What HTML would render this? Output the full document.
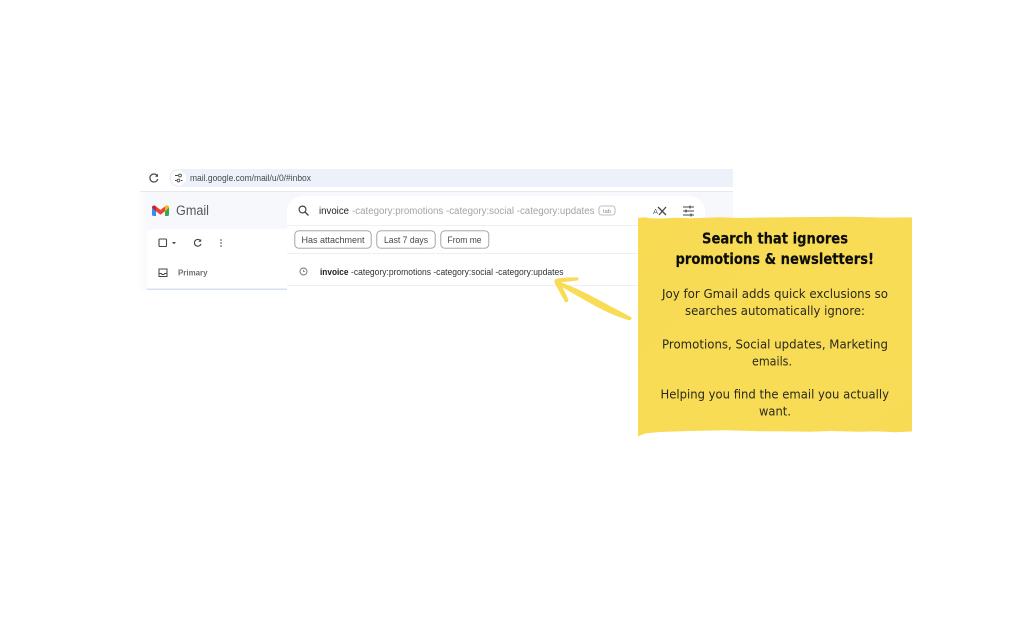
<!DOCTYPE html>
<html lang="en">
<head>
<meta charset="utf-8">
<title>Joy for Gmail</title>
<style>
html,body{margin:0;padding:0;background:#fff;width:1024px;height:640px;overflow:hidden}
svg{display:block;position:absolute;left:0;top:0}
text{font-family:"Liberation Sans",sans-serif}
.t{font-family:"DejaVu Sans","Liberation Sans",sans-serif;fill:#2b2a1c;text-anchor:start}
.h{font-weight:bold;fill:#0d0d08;stroke:#0d0d08;stroke-width:.2}
</style>
</head>
<body>
<svg width="1024" height="640" viewBox="0 0 1024 640" xmlns="http://www.w3.org/2000/svg">
<defs>
<filter id="b" x="-5%" y="-5%" width="110%" height="110%"><feGaussianBlur stdDeviation="0.35"/></filter>
<filter id="c" x="-5%" y="-5%" width="110%" height="110%"><feGaussianBlur stdDeviation="0.25"/></filter>
<linearGradient id="fade" x1="0" x2="1" y1="0" y2="0"><stop offset="0" stop-color="#f6f8fc" stop-opacity="0.4"/><stop offset="0.02" stop-color="#f6f8fc"/></linearGradient>
<linearGradient id="note" x1="0" x2="1" y1="0" y2="1"><stop offset="0" stop-color="#f8da52"/><stop offset="0.5" stop-color="#f9dc57"/><stop offset="1" stop-color="#f8db55"/></linearGradient>
</defs>
<g filter="url(#b)">
<!-- browser bar -->
<path d="M178 169H733V187H178a9 9 0 0 1 0-18z" fill="#edf2fa"/>
<circle cx="178.500" cy="178" r="7.500" fill="#fff"/>
<path d="M157.500 176.200A4 4 0 1 0 157.800 179" fill="none" stroke="#474747" stroke-width="1.200"/>
<path d="M158 173.800v3h-3z" fill="#474747"/>
<path d="M175 175.500h3M175 180.500h1.500M181 180.500h1.500" stroke="#474747" stroke-width="1"/>
<circle cx="180" cy="175.500" r="1.400" fill="none" stroke="#474747" stroke-width=".9"/>
<circle cx="178.500" cy="180.500" r="1.400" fill="none" stroke="#474747" stroke-width=".9"/>
<text x="190" y="181" font-size="9" fill="#45484f" textLength="121" lengthAdjust="spacingAndGlyphs">mail.google.com/mail/u/0/#inbox</text>
<!-- gmail background -->
<rect x="140" y="191" width="593" height="99" fill="url(#fade)"/>
<rect x="140" y="191" width="593" height="1" fill="#e6e8ec"/>
<!-- M logo -->
<path d="M152 207.500a2 2 0 0 1 3.200-1.600L156 206.500v9.500h-2.500a1.500 1.500 0 0 1-1.500-1.500z" fill="#4285f4"/>
<path d="M165 206.500l.8-.6a2 2 0 0 1 3.200 1.600v7a1.500 1.500 0 0 1-1.500 1.500H165z" fill="#34a853"/>
<path d="M156 206.500l4.500 3.400 4.500-3.400v4.800l-4.500 3.400-4.500-3.400z" fill="#ea4335"/>
<path d="M152 207.500l4 3.800v-4.800l-.8-.6a2 2 0 0 0-3.200 1.600z" fill="#c5221f"/>
<path d="M165 206.500v4.800l4-3.800a2 2 0 0 0-3.200-1.600z" fill="#fbbc04"/>
<text x="176" y="215" font-size="13.500" fill="#55595e" textLength="33" lengthAdjust="spacingAndGlyphs">Gmail</text>
<!-- left panel -->
<path d="M147 290V235a6 6 0 0 1 6-6H287V290z" fill="#fff"/>
<rect x="147" y="288.500" width="140" height="1.500" fill="#d6e0ee"/>
<rect x="159" y="239" width="7.500" height="7.500" rx="1" fill="none" stroke="#444746" stroke-width="1.100"/>
<path d="M172 242h4l-2 2.200z" fill="#444746"/>
<path d="M200.800 241.200A3.400 3.400 0 1 0 201 244" fill="none" stroke="#444746" stroke-width="1.100"/>
<path d="M201.200 239v2.800h-2.800z" fill="#444746"/>
<circle cx="221" cy="240" r=".8" fill="#444746"/><circle cx="221" cy="243" r=".8" fill="#444746"/><circle cx="221" cy="246" r=".8" fill="#444746"/>
<path d="M159 269h8v7.500h-8zM159 273.500h2.300l.8 1h1.800l.8-1H167" fill="none" stroke="#444746" stroke-width="1"/>
<text x="178" y="275.500" font-size="8" font-weight="bold" fill="#6b6f73" textLength="29.500" lengthAdjust="spacingAndGlyphs">Primary</text>
<!-- search dropdown -->
<path d="M287 290V212a16 16 0 0 1 16-16H689a16 16 0 0 1 16 16V290z" fill="#fff"/>
<rect x="287" y="225" width="418" height="1" fill="#f0f1f2"/>
<rect x="287" y="253" width="418" height="1" fill="#eeeff0"/>
<rect x="287" y="285" width="418" height="1" fill="#eeeff0"/>
<rect x="287" y="286" width="418" height="5" fill="#fff"/>
<circle cx="302.500" cy="209.500" r="3.400" fill="none" stroke="#444746" stroke-width="1.200"/>
<path d="M305 212l3.500 3.500" stroke="#444746" stroke-width="1.300"/>
<text x="319" y="214" font-size="10" fill="#1f2022" textLength="30" lengthAdjust="spacingAndGlyphs">invoice</text>
<text x="352" y="214" font-size="10" fill="#a2a4a7" textLength="242.500" lengthAdjust="spacingAndGlyphs">-category:promotions -category:social -category:updates</text>
<rect x="599" y="206" width="16" height="9" rx="2.500" fill="none" stroke="#a8aaad" stroke-width=".8"/>
<text x="603" y="213" font-size="5.500" fill="#86888b" textLength="8" lengthAdjust="spacingAndGlyphs">tab</text>
<text x="653" y="214" font-size="7.500" fill="#5f6368">A</text>
<path d="M658 207l8 8M666 207l-7 8" stroke="#444746" stroke-width="1.300"/>
<path d="M683 207h11M683 211h11M683 215h11" stroke="#444746" stroke-width="1"/>
<path d="M690 205.500v3M686 209.500v3M691 213.500v3" stroke="#444746" stroke-width="1.200"/>
<!-- chips -->
<rect x="294.800" y="230.800" width="76.400" height="17.400" rx="4" fill="#fff" stroke="#9a9c9f" stroke-width=".9"/>
<text x="301.500" y="243" font-size="9" fill="#45484c" textLength="63" lengthAdjust="spacingAndGlyphs">Has attachment</text>
<rect x="376.800" y="230.800" width="58.400" height="17.400" rx="4" fill="#fff" stroke="#9a9c9f" stroke-width=".9"/>
<text x="384" y="243" font-size="9" fill="#45484c" textLength="44" lengthAdjust="spacingAndGlyphs">Last 7 days</text>
<rect x="440.800" y="230.800" width="48" height="17.400" rx="4" fill="#fff" stroke="#9a9c9f" stroke-width=".9"/>
<text x="447.500" y="243" font-size="9" fill="#45484c" textLength="34" lengthAdjust="spacingAndGlyphs">From me</text>
<!-- suggestion -->
<circle cx="303.500" cy="271.500" r="3.500" fill="none" stroke="#6e7074" stroke-width=".9"/>
<path d="M303.500 269.800v1.900h1.600" fill="none" stroke="#6e7074" stroke-width=".7"/>
<text x="320" y="275" font-size="9" font-weight="bold" fill="#202226" textLength="28.500" lengthAdjust="spacingAndGlyphs">invoice</text>
<text x="351" y="275" font-size="9" fill="#2f3136" textLength="212.500" lengthAdjust="spacingAndGlyphs">-category:promotions -category:social -category:updates</text>
<!-- arrow -->
<path d="M557 281C575 287 592 296 610 306C618 310 625 314 631 317C632.500 319 631 320.500 628 320C615 316 602 310 590 303C579 297 567 290 557 284Z" fill="#f8dc55"/>
<path d="M578 277.500Q566 277 555.500 279Q553.500 281 555 283.500Q560 293 565 302Q568 303 568.500 300Q564.500 290 559.500 282.500Q569 281.500 577.500 280.500Q579.500 279 578 277.500Z" fill="#f8dc55"/>
<!-- note -->
<path d="M638 218L644 217.200L650 218.200L662 218.500L675 217.800L690 218.200L720 217.200L740 218L760 217.500L800 217.100L850 216.800L880 217.500L912 217.400V431.500L895 432.200L875 431.400L860 431.800L830 431L810 431.800L790 431.400L760 431.200L725 430.300L690 431L660 432L645 433.500L638 436.500Z" fill="url(#note)"/>
</g>
<g filter="url(#c)">
<text class="t h" x="702" y="243.500" font-size="15" textLength="146" lengthAdjust="spacingAndGlyphs">Search that ignores</text>
<text class="t h" x="675.500" y="264" font-size="15" textLength="198.500" lengthAdjust="spacingAndGlyphs">promotions &amp; newsletters!</text>
<text class="t" x="662" y="298" font-size="12.500" textLength="226" lengthAdjust="spacingAndGlyphs">Joy for Gmail adds quick exclusions so</text>
<text class="t" x="685" y="315" font-size="12.500" textLength="180" lengthAdjust="spacingAndGlyphs">searches automatically ignore:</text>
<text class="t" x="662" y="348.500" font-size="12.500" textLength="226" lengthAdjust="spacingAndGlyphs">Promotions, Social updates, Marketing</text>
<text class="t" x="752" y="365.500" font-size="12.500" textLength="40" lengthAdjust="spacingAndGlyphs">emails.</text>
<text class="t" x="660.500" y="398.500" font-size="12.500" textLength="228.500" lengthAdjust="spacingAndGlyphs">Helping you find the email you actually</text>
<text class="t" x="759" y="415.500" font-size="12.500" textLength="32" lengthAdjust="spacingAndGlyphs">want.</text>
</g>
</svg>
</body>
</html>
